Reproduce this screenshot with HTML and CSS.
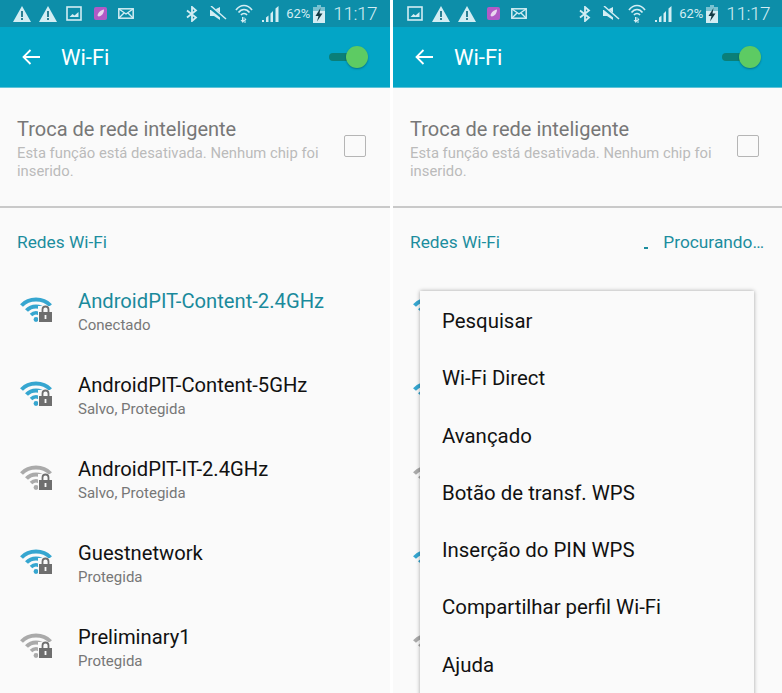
FILE: index.html
```html
<!DOCTYPE html>
<html lang="pt">
<head>
    <meta charset="UTF-8">
    <title>Wi-Fi</title>
    <link rel="stylesheet" href="styles.css">
</head>
<body>
    <!-- icones usados nos dois paineis -->
    <svg class="defs" xmlns="http://www.w3.org/2000/svg">
        <symbol id="i-warn" viewBox="0 0 18 16">
            <path d="M9 0 18 16H0Z" fill="#d3edf3"/>
            <path d="M8 5h2v6H8zM8 12h2v2H8z" fill="#2b7f92"/>
        </symbol>
        <symbol id="i-image" viewBox="0 0 16 15">
            <rect x="1" y="1" width="14" height="13" fill="none" stroke="#d3edf3" stroke-width="1.6"/>
            <path d="M3.500 11 6.500 8l2 1.500L12.500 6v5z" fill="#d3edf3"/>
        </symbol>
        <symbol id="i-app" viewBox="0 0 13 13">
            <rect width="13" height="13" rx="2" fill="#b25ac6"/>
            <path d="M3.500 8.500C4 5 7 3 10 2.500 10 6 8 9 4.500 9.500Z" fill="#e9d8ee"/>
        </symbol>
        <symbol id="i-mail" viewBox="0 0 16 11">
            <rect x=".8" y=".8" width="14.400" height="9.400" fill="none" stroke="#d3edf3" stroke-width="1.500"/>
            <path d="M1 1 8 6 15 1M1 10 6 5M15 10 10 5" fill="none" stroke="#d3edf3" stroke-width="1.400"/>
        </symbol>
        <symbol id="i-bt" viewBox="0 0 12 16">
            <path d="M1 4.500 10 11.500 6 15V1L10 4.500 1 11.500" fill="none" stroke="#d3edf3" stroke-width="1.800"/>
        </symbol>
        <symbol id="i-mute" viewBox="0 0 18 15">
            <path d="M1 4H5L11 1V14L5 10H1Z" fill="#d3edf3"/>
            <path d="M1 1 17 14" stroke="#0d8ea9" stroke-width="3.500"/>
            <path d="M2 0 17 13" stroke="#d3edf3" stroke-width="1.500"/>
        </symbol>
        <symbol id="i-wifi" viewBox="0 0 18 19">
            <g fill="none" stroke="#d3edf3" stroke-width="1.700">
                <path d="M1 6C5.500 0 12.500 0 17 6"/>
                <path d="M3.500 8.500C6.500 4.500 11.500 4.500 14.500 8.500"/>
                <path d="M6 11C7.500 9 10.500 9 12 11"/>
            </g>
            <path d="M7 13h1.500v3H10L7.800 19 5.500 16H7ZM9.500 13l2 3H10.500v3H9.500z" fill="#d3edf3"/>
        </symbol>
        <symbol id="i-signal" viewBox="0 0 17 16">
            <path d="M0 14h2v2H0zM4 11.500 6.500 9.500V16H4zM8.500 7.500 11 5V16H8.500zM13.500 2.500 16.500 0V16h-3z" fill="#d3edf3"/>
        </symbol>
        <symbol id="i-batt" viewBox="0 0 12 18">
            <path d="M4 0h4v2h4v16H0V2h4z" fill="#d3edf3" opacity=".55"/>
            <path d="M0 6h12v12H0z" fill="#d3edf3"/>
            <path d="M7.500 3 2.500 11h3L4 16.500 9.500 8.500h-3Z" fill="#123a44"/>
        </symbol>
        <symbol id="i-net" viewBox="0 0 32 26">
            <g fill="none" stroke="currentColor" stroke-linecap="butt">
                <path d="M1.500 8.500C9 .5 23 .5 30.500 8.500" stroke-width="4"/>
                <path d="M6.500 13.500C11.500 8 20.500 8 25.500 13.500" stroke-width="4"/>
                <path d="M11 18C14 15 18 15 21 18" stroke-width="3.600"/>
            </g>
            <circle cx="16" cy="22.500" r="2.400" fill="currentColor"/>
            <rect x="18" y="9" width="15" height="17" fill="#fafafa"/>
            <rect x="19" y="15" width="13" height="10" fill="#6e6e6e"/>
            <path d="M22.500 15.500V12.500a3 3 0 0 1 6 0V15.500" fill="none" stroke="#6e6e6e" stroke-width="1.800"/>
            <rect x="24.600" y="18" width="1.800" height="4" fill="#fafafa"/>
        </symbol>
    </svg>

    <!-- painel esquerdo -->
    <div class="phone">
        <div class="statusbar">
            <div class="status-left">
                <span class="cell"><svg class="warn"><use href="#i-warn"/></svg></span>
                <span class="cell"><svg class="warn"><use href="#i-warn"/></svg></span>
                <span class="cell"><svg class="image"><use href="#i-image"/></svg></span>
                <span class="cell"><svg class="app"><use href="#i-app"/></svg></span>
                <span class="cell"><svg class="mail"><use href="#i-mail"/></svg></span>
            </div>
            <div class="status-right">
                <span class="cell"><svg class="bt"><use href="#i-bt"/></svg></span>
                <span class="cell"><svg class="mute"><use href="#i-mute"/></svg></span>
                <span class="cell"><svg class="wifi"><use href="#i-wifi"/></svg></span>
                <span class="cell"><svg class="signal"><use href="#i-signal"/></svg></span>
                <span class="percent">62%</span>
                <svg class="batt"><use href="#i-batt"/></svg>
                <span class="clock">11:17</span>
            </div>
        </div>
        <div class="appbar">
            <svg class="back" viewBox="0 0 18 16"><path d="M18 8H2M8.500 1 1.500 8l7 7" fill="none" stroke="#fff" stroke-width="1.800"/></svg>
            <span class="appbar-title">Wi-Fi</span>
            <span class="toggle"></span>
        </div>
        <div class="smart">
            <div class="smart-text">
                <div class="smart-title">Troca de rede inteligente</div>
                <div class="smart-sub">Esta função está desativada. Nenhum chip foi inserido.</div>
            </div>
            <span class="checkbox"></span>
        </div>
        <div class="section">
            <span>Redes Wi-Fi</span>
        </div>
        <div class="net">
            <svg class="net-icon on"><use href="#i-net"/></svg>
            <div>
                <div class="net-name connected">AndroidPIT-Content-2.4GHz</div>
                <div class="net-sub">Conectado</div>
            </div>
        </div>
        <div class="net">
            <svg class="net-icon on"><use href="#i-net"/></svg>
            <div>
                <div class="net-name">AndroidPIT-Content-5GHz</div>
                <div class="net-sub">Salvo, Protegida</div>
            </div>
        </div>
        <div class="net">
            <svg class="net-icon off"><use href="#i-net"/></svg>
            <div>
                <div class="net-name">AndroidPIT-IT-2.4GHz</div>
                <div class="net-sub">Salvo, Protegida</div>
            </div>
        </div>
        <div class="net">
            <svg class="net-icon on"><use href="#i-net"/></svg>
            <div>
                <div class="net-name">Guestnetwork</div>
                <div class="net-sub">Protegida</div>
            </div>
        </div>
        <div class="net">
            <svg class="net-icon off"><use href="#i-net"/></svg>
            <div>
                <div class="net-name">Preliminary1</div>
                <div class="net-sub">Protegida</div>
            </div>
        </div>
    </div>

    <!-- painel direito, com o menu aberto -->
    <div class="phone">
        <div class="statusbar">
            <div class="status-left">
                <span class="cell"><svg class="image"><use href="#i-image"/></svg></span>
                <span class="cell"><svg class="warn"><use href="#i-warn"/></svg></span>
                <span class="cell"><svg class="warn"><use href="#i-warn"/></svg></span>
                <span class="cell"><svg class="app"><use href="#i-app"/></svg></span>
                <span class="cell"><svg class="mail"><use href="#i-mail"/></svg></span>
            </div>
            <div class="status-right">
                <span class="cell"><svg class="bt"><use href="#i-bt"/></svg></span>
                <span class="cell"><svg class="mute"><use href="#i-mute"/></svg></span>
                <span class="cell"><svg class="wifi"><use href="#i-wifi"/></svg></span>
                <span class="cell"><svg class="signal"><use href="#i-signal"/></svg></span>
                <span class="percent">62%</span>
                <svg class="batt"><use href="#i-batt"/></svg>
                <span class="clock">11:17</span>
            </div>
        </div>
        <div class="appbar">
            <svg class="back" viewBox="0 0 18 16"><path d="M18 8H2M8.500 1 1.500 8l7 7" fill="none" stroke="#fff" stroke-width="1.800"/></svg>
            <span class="appbar-title">Wi-Fi</span>
            <span class="toggle"></span>
        </div>
        <div class="smart">
            <div class="smart-text">
                <div class="smart-title">Troca de rede inteligente</div>
                <div class="smart-sub">Esta função está desativada. Nenhum chip foi inserido.</div>
            </div>
            <span class="checkbox"></span>
        </div>
        <div class="section">
            <span>Redes Wi-Fi</span>
            <span class="scanning"><span class="spinner"></span>Procurando…</span>
        </div>
        <div class="net">
            <svg class="net-icon on"><use href="#i-net"/></svg>
        </div>
        <div class="net">
            <svg class="net-icon on"><use href="#i-net"/></svg>
        </div>
        <div class="net">
            <svg class="net-icon off"><use href="#i-net"/></svg>
        </div>
        <div class="net">
            <svg class="net-icon on"><use href="#i-net"/></svg>
        </div>
        <div class="net">
            <svg class="net-icon off"><use href="#i-net"/></svg>
        </div>
        <ul class="menu">
            <li>Pesquisar</li>
            <li>Wi-Fi Direct</li>
            <li>Avançado</li>
            <li>Botão de transf. WPS</li>
            <li>Inserção do PIN WPS</li>
            <li>Compartilhar perfil Wi-Fi</li>
            <li>Ajuda</li>
        </ul>
    </div>
</body>
</html>
```

FILE: styles.css
```css
html, body {
    margin: 0;
    height: 693px;
    overflow: hidden;
    background: #fff;
}
body {
    display: flex;
    gap: 3px;
    font-family: Roboto, sans-serif;
}
.defs {
    display: none;
}
.phone {
    position: relative;
    flex: none;
    width: 390px;
    height: 693px;
    overflow: hidden;
    background: #fafafa;
}

/* barra de status */
.statusbar {
    height: 27px;
    display: flex;
    justify-content: space-between;
    align-items: center;
    padding: 0 13px 0 9px;
    background: #0d8ea9;
    color: #d3edf3;
}
.status-left, .status-right {
    display: flex;
    align-items: center;
}
.status-right {
    height: 27px;
}
.cell {
    width: 26px;
    height: 27px;
    display: flex;
    align-items: center;
    justify-content: center;
}
.warn { width: 18px; height: 16px; }
.image { width: 16px; height: 15px; }
.app { width: 13px; height: 13px; }
.mail { width: 16px; height: 11px; }
.bt { width: 12px; height: 16px; }
.mute { width: 18px; height: 15px; }
.wifi { width: 18px; height: 19px; }
.signal { width: 17px; height: 16px; }
.batt {
    width: 12px;
    height: 18px;
    margin: 0 8px 0 3px;
}
.percent {
    font-size: 13px;
    margin-left: 3px;
}
.clock {
    font-size: 19px;
    font-weight: 300;
    letter-spacing: -.5px;
}

/* barra do app */
.appbar {
    height: 60px;
    display: flex;
    align-items: center;
    padding-left: 22px;
    background: #03a5c6;
    border-bottom: 1px solid #5fc3d8;
}
.back {
    width: 18px;
    height: 16px;
    margin-right: 21px;
}
.appbar-title {
    font-size: 22px;
    color: #fff;
}
.toggle {
    position: relative;
    width: 26px;
    height: 8px;
    margin-left: auto;
    margin-right: 35px;
    border-radius: 4px;
    background: #0a7f78;
}
.toggle::after {
    content: "";
    position: absolute;
    left: 17px;
    top: -7px;
    width: 22px;
    height: 22px;
    border-radius: 50%;
    background: #5dcb63;
    box-shadow: 0 1px 2px rgba(0, 0, 0, .3);
}

/* troca de rede */
.smart {
    height: 120px;
    box-sizing: border-box;
    display: flex;
    align-items: flex-start;
    justify-content: space-between;
    padding: 29px 24px 0 17px;
    border-bottom: 2px solid #c9c9c9;
}
.smart-text {
    width: 312px;
}
.smart-title {
    font-size: 20px;
    line-height: 24px;
    color: #777;
}
.smart-sub {
    font-size: 14.800px;
    line-height: 18px;
    margin-top: 3px;
    color: #bbb;
}
.checkbox {
    width: 20px;
    height: 20px;
    margin-top: 18px;
    border: 1px solid #b5b5b5;
    border-radius: 2px;
}

/* lista de redes */
.section {
    height: 77px;
    box-sizing: border-box;
    display: flex;
    justify-content: space-between;
    padding: 25px 19px 0 17px;
    font-size: 17.300px;
    line-height: 19px;
    color: #1c8d9e;
}
.scanning {
    display: flex;
}
.spinner {
    width: 4px;
    height: 2px;
    margin: 14px 15px 0 0;
    background: #1c8d9e;
}
.net {
    height: 84px;
    box-sizing: border-box;
    display: flex;
    align-items: flex-start;
    padding: 3px 0 0 20px;
}
.net-icon {
    width: 32px;
    height: 26px;
    margin: 9px 26px 0 0;
}
.on { color: #36a6d0; }
.off { color: #aaaaaa; }
.net-name {
    font-size: 20.200px;
    line-height: 26px;
    color: #111;
}
.connected {
    color: #1a8a9c;
}
.net-sub {
    font-size: 15px;
    line-height: 18px;
    margin-top: 2px;
    color: #777;
}

/* menu aberto */
.menu {
    position: absolute;
    left: 27px;
    top: 291px;
    width: 334px;
    height: 420px;
    margin: 0;
    padding: 2px 0 0;
    list-style: none;
    background: #fafafa;
    box-shadow: 0 0 4px rgba(0, 0, 0, .35);
}
.menu li {
    height: 57.300px;
    line-height: 57.300px;
    padding-left: 22px;
    font-size: 20.400px;
    color: #111;
}
```
